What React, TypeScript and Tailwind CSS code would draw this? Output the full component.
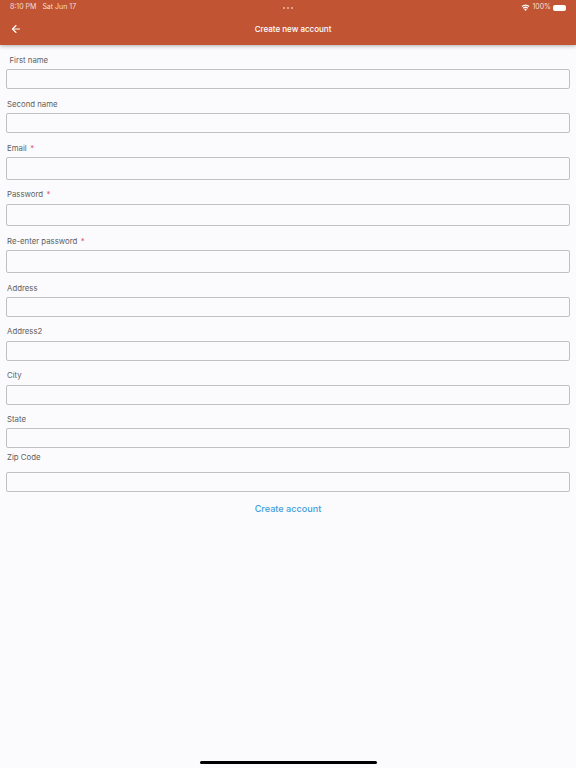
import React from 'react'
import { ArrowLeft } from 'lucide-react'

const fields = [
  { label: 'First name', wrap: 'pt-[9px]', labelClass: 'pl-[3.5px] mb-[1px]', input: 'h-[20px]' },
  { label: 'Second name', wrap: 'pt-[9px]', labelClass: 'pl-[1px] mb-[1px]', input: 'h-[20px]' },
  { label: 'Email', required: true, wrap: 'pt-[9px]', labelClass: 'pl-[1px] mb-[1px]', input: 'h-[23px]' },
  { label: 'Password', required: true, wrap: 'pt-[8px]', labelClass: 'pl-[1px] mb-[2px]', input: 'h-[22px]' },
  { label: 'Re-enter password', required: true, wrap: 'pt-[9px]', labelClass: 'pl-[1px] mb-[1px]', input: 'h-[23px]' },
  { label: 'Address', wrap: 'pt-[9px]', labelClass: 'pl-[1px] mb-[1px]', input: 'h-[20px]' },
  { label: 'Address2', wrap: 'pt-[8px]', labelClass: 'pl-[1px] mb-[2px]', input: 'h-[20px]' },
  { label: 'City', wrap: 'pt-[8px]', labelClass: 'pl-[1px] mb-[2px]', input: 'h-[20px]' },
  { label: 'State', wrap: 'pt-[8px]', labelClass: 'pl-[1px] mb-[1px]', input: 'h-[20px]' },
  { label: 'Zip Code', wrap: 'pt-[3px]', labelClass: 'pl-[1px] mb-[7px]', input: 'h-[20px]' },
]

function WifiIcon() {
  return (
    <svg width="9" height="7" viewBox="0 0 18 14" fill="white">
      <path d="M9 14 L6.4 10.8 A4 4 0 0 1 11.6 10.8 Z" />
      <path d="M5.2 9.4 L3.6 7.4 A8.4 8.4 0 0 1 14.4 7.4 L12.8 9.4 A6 6 0 0 0 5.2 9.4 Z" />
      <path d="M2.6 6.2 L1 4.2 A12.6 12.6 0 0 1 17 4.2 L15.4 6.2 A10 10 0 0 0 2.6 6.2 Z" />
    </svg>
  )
}

function StatusBar() {
  return (
    <div className="h-[14px] pt-[1px] grid grid-cols-3 items-center pl-[10px] pr-[10px] text-[7px] text-[#f6dfd6]">
      <div className="flex gap-[6px]">
        <span>8:10 PM</span>
        <span>Sat Jun 17</span>
      </div>
      <div className="flex justify-center gap-[2px]">
        <span className="w-[2px] h-[2px] rounded-full bg-[#f3b8a4]" />
        <span className="w-[2px] h-[2px] rounded-full bg-[#f3b8a4]" />
        <span className="w-[2px] h-[2px] rounded-full bg-[#f3b8a4]" />
      </div>
      <div className="flex items-center justify-end gap-[2px]">
        <WifiIcon />
        <span>100%</span>
        <span className="w-[13px] h-[6px] rounded-[2px] bg-white" />
      </div>
    </div>
  )
}

export default function App() {
  return (
    <div className="w-[576px] h-[768px] relative overflow-hidden bg-[#fbfafc] font-['Inter',sans-serif] flex flex-col">
      <header className="h-[45px] shrink-0 bg-[#c05433] shadow-[0_1px_4px_rgba(0,0,0,0.3)] text-white">
        <StatusBar />
        <div className="h-[30px] flex items-center pl-[10px]">
          <ArrowLeft className="w-[12px] h-[12px]" strokeWidth={2.2} />
          <span className="flex-1 text-center text-[8px] font-medium ml-[-22px] translate-x-[5px]">Create new account</span>
        </div>
      </header>
      <main className="px-[6px]">
        {fields.map(f => (
          <div key={f.label} className={f.wrap}>
            <div className={'h-[14px] flex items-center text-[7.8px] text-[#5f5f5f] ' + f.labelClass}>
              <span>{f.label}</span>
              {f.required && <span className="ml-[3.5px] text-[#e0567a]">*</span>}
            </div>
            <div className={'border border-[#c0c0c2] rounded-[2px] bg-[#fbfbfd] ' + f.input} />
          </div>
        ))}
        <button className="block mx-auto mt-[9px] h-[16px] text-[9.1px] font-medium leading-[16px] text-[#3b9fdc]">Create account</button>
      </main>
      <div className="absolute bottom-[4px] left-[200px] w-[177px] h-[3px] rounded-full bg-black" />
    </div>
  )
}
